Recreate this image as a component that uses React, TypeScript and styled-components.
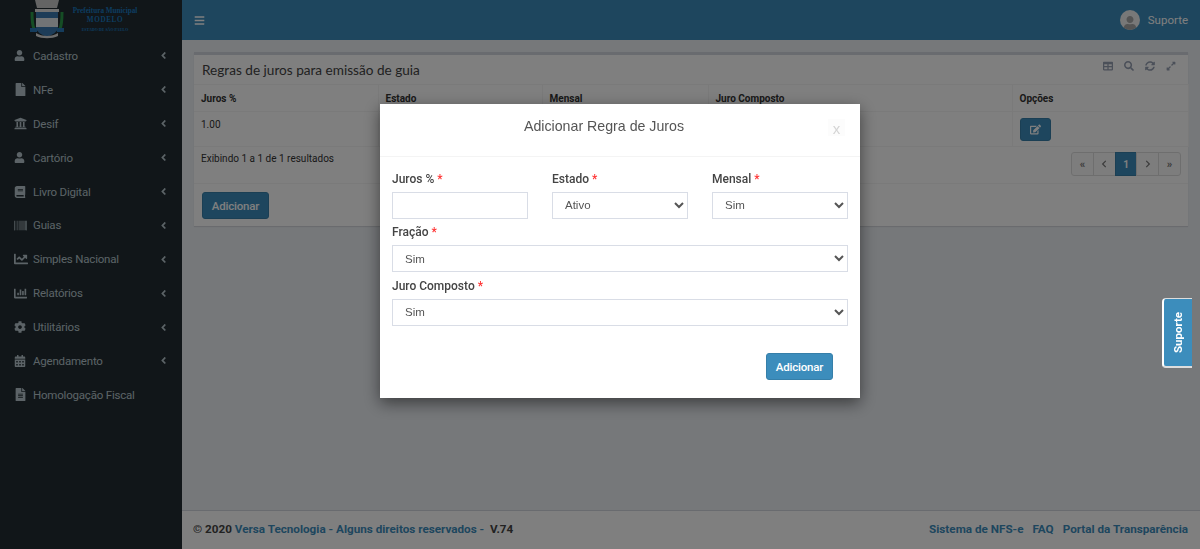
import React from "react";
import styled, { createGlobalStyle } from "styled-components";
import {
  FaAngleLeft,
  FaBars,
  FaBook,
  FaBarcode,
  FaCalendarAlt,
  FaChartBar,
  FaChartLine,
  FaChevronLeft,
  FaChevronRight,
  FaCog,
  FaEdit,
  FaExpandAlt,
  FaFile,
  FaFileAlt,
  FaSearch,
  FaSyncAlt,
  FaTable,
  FaUniversity,
  FaUser,
} from "react-icons/fa";

const GlobalStyle = createGlobalStyle`
  html, body {
    margin: 0;
    height: 100%;
    overflow: hidden;
  }
  body {
    font-family: "Liberation Sans", Arial, sans-serif;
    background: #ecf0f5;
  }
  * {
    box-sizing: border-box;
  }
`;

const Shell = styled.div`
  display: flex;
  height: 549px;
  width: 1200px;
`;

const Sidebar = styled.aside`
  width: 182px;
  flex-shrink: 0;
  background: #222d32;
  display: flex;
  flex-direction: column;
`;

const Brand = styled.div`
  height: 39px;
  display: flex;
  padding-left: 30px;
  overflow: hidden;
`;

const BrandText = styled.div`
  width: 78px;
  display: flex;
  flex-direction: column;
  align-items: center;
  color: #1a7ac0;
  font-family: "Liberation Serif", serif;
  font-weight: bold;
  font-size: 7.2px;
  line-height: 8px;
  padding-top: 7px;
  white-space: nowrap;

  span:nth-child(2) {
    margin-top: 1px;
    letter-spacing: 0.6px;
  }

  span:nth-child(3) {
    margin-top: 2px;
    font-size: 4px;
  }
`;

const Menu = styled.nav`
  display: flex;
  flex-direction: column;
`;

const MenuItem = styled.a`
  height: 33.9px;
  display: flex;
  align-items: center;
  padding-left: 14px;
  color: #b8c7ce;
  font-family: Roboto, sans-serif;
  font-size: 11.5px;
  letter-spacing: -0.2px;

  svg {
    flex-shrink: 0;
  }
`;

const MenuIcon = styled.span<{ $size: number }>`
  width: 19px;
  display: flex;
  align-items: center;
  font-size: ${(p) => p.$size}px;
`;

const MenuLabel = styled.span`
  flex: 1;
`;

const MenuArrow = styled.span`
  width: 24px;
  display: flex;
  font-size: 11px;
`;

const Main = styled.div`
  flex: 1;
  display: flex;
  flex-direction: column;
  min-width: 0;
`;

const Topbar = styled.header`
  height: 40px;
  flex-shrink: 0;
  background: #3c8dbc;
  display: flex;
  align-items: center;
  justify-content: space-between;
  padding: 0 12px;
  color: #fff;
  font-size: 11px;
`;

const UserMenu = styled.div`
  display: flex;
  align-items: center;
  gap: 8px;
  font-family: Roboto, sans-serif;
  font-size: 11.5px;
`;

const Avatar = styled.span`
  width: 20px;
  height: 20px;
  border-radius: 50%;
  background: #f0f0f0;
  color: #a8a8a8;
  display: flex;
  align-items: flex-end;
  justify-content: center;
  overflow: hidden;
  font-size: 14px;
`;

const Content = styled.main`
  flex: 1;
  padding: 12px 12px 0;
`;

const Box = styled.section`
  background: #fff;
  border-top: 3px solid #d2d6de;
  box-shadow: 0 1px 1px rgba(0, 0, 0, 0.1);
  height: 174px;
`;

const BoxHeader = styled.div`
  height: 29px;
  display: flex;
  align-items: center;
  justify-content: space-between;
  padding: 0 12px 0 8px;
`;

const BoxTitle = styled.h3`
  margin: 0;
  font-family: Lato, sans-serif;
  font-weight: 400;
  font-size: 13.6px;
  color: #444;
`;

const BoxTools = styled.div`
  display: flex;
  gap: 11px;
  color: #97a0b3;
  font-size: 10px;
  margin-top: -8px;
`;

const Table = styled.table`
  width: 100%;
  border-collapse: collapse;
  table-layout: fixed;
  font-family: Roboto, sans-serif;
  font-size: 10px;
  color: #333;
`;

const Col = styled.col<{ $w: number }>`
  width: ${(p) => p.$w}px;
`;

const HeadCell = styled.th`
  height: 27px;
  text-align: left;
  padding: 0 7px;
  font-weight: 700;
  border: 1px solid #f4f4f4;
  border-left: none;
`;

const BodyCell = styled.td`
  height: 35px;
  padding: 6px 7px 0;
  line-height: 14px;
  vertical-align: top;
  border: 1px solid #f4f4f4;
  border-left: none;
`;

const EditButton = styled.button`
  width: 31px;
  height: 23px;
  border: 1px solid #367fa9;
  border-radius: 3px;
  background: #3c8dbc;
  color: #fff;
  font-size: 11px;
  display: flex;
  align-items: center;
  justify-content: center;
  padding: 0;
`;

const TableFooter = styled.div`
  height: 37px;
  display: flex;
  justify-content: space-between;
  padding: 5px 7px 0;
  border-bottom: 1px solid #f4f4f4;
  font-family: Roboto, sans-serif;
  font-size: 10px;
  color: #333;
`;

const ResultText = styled.span`
  margin-top: 1px;
`;

const Pagination = styled.div`
  display: flex;
  height: 24px;
`;

const PageLink = styled.span<{ $active?: boolean }>`
  width: 22.8px;
  display: flex;
  align-items: center;
  justify-content: center;
  margin-left: -1px;
  font-size: ${(p) => (p.$active ? "10px" : "11px")};
  font-weight: bold;
  color: ${(p) => (p.$active ? "#fff" : "#777")};
  background: ${(p) => (p.$active ? "#3c8dbc" : "#fafafa")};
  border: 1px solid ${(p) => (p.$active ? "#367fa9" : "#ddd")};

  svg {
    width: 8px;
    height: 8px;
  }

  &:first-child {
    border-radius: 3px 0 0 3px;
  }

  &:last-child {
    border-radius: 0 3px 3px 0;
  }
`;

const BoxFooter = styled.div`
  padding: 8px;
`;

const PrimaryButton = styled.button`
  width: 67px;
  height: 27px;
  border: 1px solid #367fa9;
  border-radius: 3px;
  background: #3c8dbc;
  color: #fff;
  font-family: Roboto, sans-serif;
  font-size: 11.5px;
  font-weight: 500;
  letter-spacing: -0.2px;
  padding: 0;
`;

const Footer = styled.footer`
  height: 39px;
  flex-shrink: 0;
  border-top: 1px solid #d2d6de;
  background: #fff;
  display: flex;
  align-items: center;
  justify-content: space-between;
  padding: 0 12px 2px 11px;
  font-family: Roboto, sans-serif;
  font-weight: 700;
  font-size: 11.7px;
  color: #444;
`;

const FooterLink = styled.a`
  color: #3c8dbc;
`;

const FooterLinks = styled.div`
  display: flex;
  gap: 9px;
`;

const Backdrop = styled.div`
  position: fixed;
  inset: 0;
  background: rgba(0, 0, 0, 0.5);
  display: flex;
  justify-content: center;
  padding: 104px 0 0 40px;
`;

const Modal = styled.div`
  width: 480px;
  height: 294px;
  background: #fff;
  box-shadow: 0 5px 15px rgba(0, 0, 0, 0.5);
  display: flex;
  flex-direction: column;
`;

const ModalHeader = styled.div`
  height: 53px;
  flex-shrink: 0;
  border-bottom: 1px solid #f4f4f4;
  display: flex;
  align-items: center;
  justify-content: center;
  position: relative;
  padding: 0 32px 9px 0;
`;

const ModalTitle = styled.h4`
  margin: 0;
  font-weight: 400;
  font-size: 14.2px;
  color: #555;
`;

const CloseButton = styled.span`
  position: absolute;
  right: 15px;
  top: 15px;
  width: 17px;
  height: 17px;
  background: #fcfcfc;
  color: #d5d5d5;
  font-size: 15px;
  line-height: 19px;
  text-align: center;
`;

const ModalBody = styled.form`
  padding: 13.6px 12px 0;
  display: flex;
  flex-direction: column;
  gap: 5.5px;
`;

const FieldRow = styled.div`
  display: flex;
  gap: 24px;
`;

const Field = styled.label`
  flex: 1;
  display: flex;
  flex-direction: column;
  gap: 5px;
  font-family: Roboto, sans-serif;
  font-size: 12px;
  font-weight: 500;
  color: #444;
  line-height: 16px;
`;

const Required = styled.span`
  color: #f33;
  margin-left: 3px;
`;

const Input = styled.input`
  height: 27px;
  width: 100%;
  border: 1px solid #d9dde6;
  padding: 0 12px;
  background: #fff;
`;

const Select = styled.select`
  height: 27px;
  width: 100%;
  border: 1px solid #d9dde6;
  padding: 0 8px;
  background: #fff;
  color: #555;
  font-family: "Liberation Sans", Arial, sans-serif;
  font-size: 11.5px;
  border-radius: 0;
`;

const ModalActions = styled.div`
  display: flex;
  justify-content: flex-end;
  padding: 22px 15px 0 0;
`;

const SupportTab = styled.div`
  position: fixed;
  right: 8px;
  top: 298px;
  width: 30px;
  height: 70px;
  background: #3c8dbc;
  border-left: 2px solid #fff;
  border-top: 1px solid #ddd;
  border-bottom: 2px solid #ddd;
  border-radius: 4px 0 0 4px;
  display: flex;
  align-items: center;
  justify-content: center;
`;

const SupportLabel = styled.span`
  writing-mode: vertical-rl;
  transform: rotate(180deg);
  color: #fff;
  font-family: Roboto, sans-serif;
  font-weight: 700;
  font-size: 11.5px;
  margin-left: -1px;
`;

const Crest = () => (
  <svg width="36" height="40" viewBox="0 0 36 40" style={{ flexShrink: 0 }}>
    <path d="M5 0h24l-2 8H7z" fill="#c8c8c8" />
    <path d="M5 9h24v3H5z" fill="#e2e2e2" />
    <path d="M6 12h22v15c0 5-6 8-11 10-5-2-11-5-11-10z" fill="#3a78b0" />
    <rect x="6" y="18" width="22" height="9" fill="#e4e8ec" />
    <path d="M2 12c0 7 0 12 2 17M32 12c0 7 0 12-2 17" stroke="#2a9a4a" strokeWidth="3" fill="none" />
    <path d="M0 28h7v4H0zM27 28h7v4h-7z" fill="#2a78b8" />
    <path d="M6 33c6 4 16 4 22 0v3c-6 3-16 3-22 0z" fill="#d8d8d8" />
  </svg>
);

const menu = [
  { label: "Cadastro", icon: <FaUser />, size: 11, arrow: true },
  { label: "NFe", icon: <FaFile />, size: 13, arrow: true },
  { label: "Desif", icon: <FaUniversity />, size: 13, arrow: true },
  { label: "Cartório", icon: <FaUser />, size: 11, arrow: true },
  { label: "Livro Digital", icon: <FaBook />, size: 12, arrow: true },
  { label: "Guias", icon: <FaBarcode />, size: 13, arrow: true },
  { label: "Simples Nacional", icon: <FaChartLine />, size: 14, arrow: true },
  { label: "Relatórios", icon: <FaChartBar />, size: 13, arrow: true },
  { label: "Utilitários", icon: <FaCog />, size: 12, arrow: true },
  { label: "Agendamento", icon: <FaCalendarAlt />, size: 12, arrow: true },
  { label: "Homologação Fiscal", icon: <FaFileAlt />, size: 13, arrow: false },
];

// the modal hides the values of the middle columns
const columns = [
  { label: "Juros %", width: 184, value: "1.00" },
  { label: "Estado", width: 164, value: "" },
  { label: "Mensal", width: 166, value: "" },
  { label: "Juro Composto", width: 304, value: "" },
];

export default function App() {
  return (
    <>
      <GlobalStyle />
      <Shell>
        <Sidebar>
          <Brand>
            <Crest />
            <BrandText>
              <span>Prefeitura Municipal</span>
              <span>MODELO</span>
              <span>ESTADO DE SÃO PAULO</span>
            </BrandText>
          </Brand>
          <Menu>
            {menu.map((item) => (
              <MenuItem key={item.label}>
                <MenuIcon $size={item.size}>{item.icon}</MenuIcon>
                <MenuLabel>{item.label}</MenuLabel>
                {item.arrow && (
                  <MenuArrow>
                    <FaAngleLeft />
                  </MenuArrow>
                )}
              </MenuItem>
            ))}
          </Menu>
        </Sidebar>
        <Main>
          <Topbar>
            <FaBars />
            <UserMenu>
              <Avatar>
                <FaUser />
              </Avatar>
              Suporte
            </UserMenu>
          </Topbar>
          <Content>
            <Box>
              <BoxHeader>
                <BoxTitle>Regras de juros para emissão de guia</BoxTitle>
                <BoxTools>
                  <FaTable />
                  <FaSearch />
                  <FaSyncAlt />
                  <FaExpandAlt />
                </BoxTools>
              </BoxHeader>
              <Table>
                <colgroup>
                  {columns.map((c) => (
                    <Col key={c.label} $w={c.width} />
                  ))}
                  <Col $w={176} />
                </colgroup>
                <thead>
                  <tr>
                    {columns.map((c) => (
                      <HeadCell key={c.label}>{c.label}</HeadCell>
                    ))}
                    <HeadCell>Opções</HeadCell>
                  </tr>
                </thead>
                <tbody>
                  <tr>
                    {columns.map((c) => (
                      <BodyCell key={c.label}>{c.value}</BodyCell>
                    ))}
                    <BodyCell>
                      <EditButton>
                        <FaEdit />
                      </EditButton>
                    </BodyCell>
                  </tr>
                </tbody>
              </Table>
              <TableFooter>
                <ResultText>Exibindo 1 a 1 de 1 resultados</ResultText>
                <Pagination>
                  <PageLink>«</PageLink>
                  <PageLink>
                    <FaChevronLeft />
                  </PageLink>
                  <PageLink $active>1</PageLink>
                  <PageLink>
                    <FaChevronRight />
                  </PageLink>
                  <PageLink>»</PageLink>
                </Pagination>
              </TableFooter>
              <BoxFooter>
                <PrimaryButton>Adicionar</PrimaryButton>
              </BoxFooter>
            </Box>
          </Content>
          <Footer>
            <span>
              © 2020 <FooterLink>Versa Tecnologia - Alguns direitos reservados - </FooterLink>
              &nbsp;V.74
            </span>
            <FooterLinks>
              <FooterLink>Sistema de NFS-e</FooterLink>
              <FooterLink>FAQ</FooterLink>
              <FooterLink>Portal da Transparência</FooterLink>
            </FooterLinks>
          </Footer>
        </Main>
      </Shell>
      <Backdrop>
        <Modal>
          <ModalHeader>
            <ModalTitle>Adicionar Regra de Juros</ModalTitle>
            <CloseButton>x</CloseButton>
          </ModalHeader>
          <ModalBody>
            <FieldRow>
              <Field>
                <span>
                  Juros %<Required>*</Required>
                </span>
                <Input type="text" />
              </Field>
              <Field>
                <span>
                  Estado<Required>*</Required>
                </span>
                <Select defaultValue="Ativo">
                  <option>Ativo</option>
                  <option>Inativo</option>
                </Select>
              </Field>
              <Field>
                <span>
                  Mensal<Required>*</Required>
                </span>
                <Select defaultValue="Sim">
                  <option>Sim</option>
                  <option>Não</option>
                </Select>
              </Field>
            </FieldRow>
            <Field>
              <span>
                Fração<Required>*</Required>
              </span>
              <Select defaultValue="Sim">
                <option>Sim</option>
                <option>Não</option>
              </Select>
            </Field>
            <Field>
              <span>
                Juro Composto<Required>*</Required>
              </span>
              <Select defaultValue="Sim">
                <option>Sim</option>
                <option>Não</option>
              </Select>
            </Field>
            <ModalActions>
              <PrimaryButton type="button">Adicionar</PrimaryButton>
            </ModalActions>
          </ModalBody>
        </Modal>
      </Backdrop>
      <SupportTab>
        <SupportLabel>Suporte</SupportLabel>
      </SupportTab>
    </>
  );
}
